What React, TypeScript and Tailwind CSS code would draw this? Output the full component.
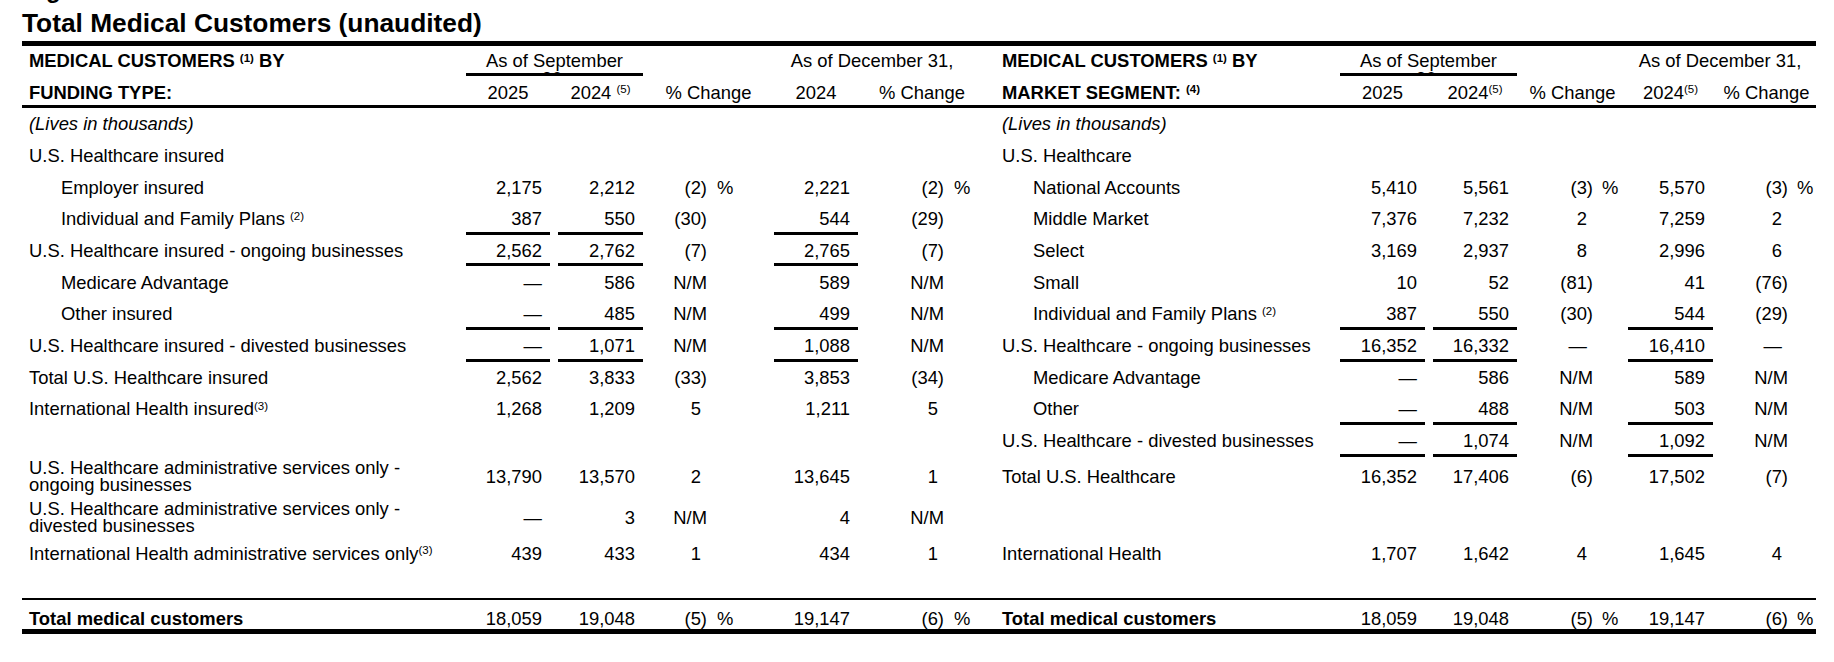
import React from "react";

type Side = {
  label: string;
  indent: string;
  a: string;
  b: string;
  ab: string;
  pv: string;
  ps: string;
  p: string;
  d: string;
  ev: string;
  es: string;
  de: string;
};

const left: Side = {
  label: "w-[440px] pl-[7px]",
  indent: "pl-[39px]",
  a: "w-[92px]",
  b: "w-[93px]",
  ab: "w-[185px]",
  pv: "w-[60px]",
  ps: "w-[63px] pl-[10px]",
  p: "w-[123px]",
  d: "w-[92px]",
  ev: "w-[82px]",
  es: "w-[38px] pl-[10px]",
  de: "w-[212px] pr-[8px]",
};

const right: Side = {
  label: "w-[354px] pl-[20px]",
  indent: "pl-[51px]",
  a: "w-[93px]",
  b: "w-[92px]",
  ab: "w-[185px]",
  pv: "w-[72px]",
  ps: "w-[31px] pl-[9px]",
  p: "w-[103px]",
  d: "w-[93px]",
  ev: "w-[71px]",
  es: "w-[28px] pl-[9px]",
  de: "w-[192px]",
};

// shared row heights so both halves line up
const heights = [
  "h-[31.7px]",
  "h-[31.7px]",
  "h-[31.7px]",
  "h-[31.7px]",
  "h-[31.7px]",
  "h-[31.7px]",
  "h-[31.7px]",
  "h-[31.7px]",
  "h-[31.7px]",
  "h-[31.7px]",
  "h-[31.7px]",
  "h-[39.3px]",
  "h-[43px]",
  "h-[29px]",
];

type Row = {
  label?: React.ReactNode;
  indent?: boolean;
  italic?: boolean;
  v?: [string, string, string, string, string];
  pct?: boolean;
  ul?: boolean;
};

const Sup = ({ children }: { children: React.ReactNode }) => (
  <sup className="text-[11.5px]">{children}</sup>
);

const TwoLine = ({ a, b }: { a: string; b: string }) => (
  <div className="leading-[17.5px]">
    {a}
    <br />
    {b}
  </div>
);

const leftRows: Row[] = [
  { label: "(Lives in thousands)", italic: true },
  { label: "U.S. Healthcare insured" },
  { label: "Employer insured", indent: true, v: ["2,175", "2,212", "(2)", "2,221", "(2)"], pct: true },
  {
    label: (
      <>
        Individual and Family Plans <Sup>(2)</Sup>
      </>
    ),
    indent: true,
    v: ["387", "550", "(30)", "544", "(29)"],
    ul: true,
  },
  { label: "U.S. Healthcare insured - ongoing businesses", v: ["2,562", "2,762", "(7)", "2,765", "(7)"], ul: true },
  { label: "Medicare Advantage", indent: true, v: ["—", "586", "N/M", "589", "N/M"] },
  { label: "Other insured", indent: true, v: ["—", "485", "N/M", "499", "N/M"], ul: true },
  { label: "U.S. Healthcare insured - divested businesses", v: ["—", "1,071", "N/M", "1,088", "N/M"], ul: true },
  { label: "Total U.S. Healthcare insured", v: ["2,562", "3,833", "(33)", "3,853", "(34)"] },
  {
    label: (
      <>
        International Health insured<Sup>(3)</Sup>
      </>
    ),
    v: ["1,268", "1,209", "5", "1,211", "5"],
  },
  {},
  {
    label: <TwoLine a="U.S. Healthcare administrative services only -" b="ongoing businesses" />,
    v: ["13,790", "13,570", "2", "13,645", "1"],
  },
  {
    label: <TwoLine a="U.S. Healthcare administrative services only -" b="divested businesses" />,
    v: ["—", "3", "N/M", "4", "N/M"],
  },
  {
    label: (
      <>
        International Health administrative services only<Sup>(3)</Sup>
      </>
    ),
    v: ["439", "433", "1", "434", "1"],
  },
];

const rightRows: Row[] = [
  { label: "(Lives in thousands)", italic: true },
  { label: "U.S. Healthcare" },
  { label: "National Accounts", indent: true, v: ["5,410", "5,561", "(3)", "5,570", "(3)"], pct: true },
  { label: "Middle Market", indent: true, v: ["7,376", "7,232", "2", "7,259", "2"] },
  { label: "Select", indent: true, v: ["3,169", "2,937", "8", "2,996", "6"] },
  { label: "Small", indent: true, v: ["10", "52", "(81)", "41", "(76)"] },
  {
    label: (
      <>
        Individual and Family Plans <Sup>(2)</Sup>
      </>
    ),
    indent: true,
    v: ["387", "550", "(30)", "544", "(29)"],
    ul: true,
  },
  { label: "U.S. Healthcare - ongoing businesses", v: ["16,352", "16,332", "—", "16,410", "—"], ul: true },
  { label: "Medicare Advantage", indent: true, v: ["—", "586", "N/M", "589", "N/M"] },
  { label: "Other", indent: true, v: ["—", "488", "N/M", "503", "N/M"], ul: true },
  { label: "U.S. Healthcare - divested businesses", v: ["—", "1,074", "N/M", "1,092", "N/M"], ul: true },
  { label: "Total U.S. Healthcare", v: ["16,352", "17,406", "(6)", "17,502", "(7)"] },
  {},
  { label: "International Health", v: ["1,707", "1,642", "4", "1,645", "4"] },
];

const Pct = ({ v }: { v: string }) => {
  const pad = !(v.startsWith("(") || v === "N/M");
  return (
    <span className="whitespace-nowrap">
      {v}
      {pad && <span className="invisible">)</span>}
    </span>
  );
};

const Num = ({ w, v, ul }: { w: string; v?: string; ul?: boolean }) => (
  <div className={`${w} h-full px-[4px]`}>
    <div
      className={`h-full flex items-center justify-end pr-[8px] whitespace-nowrap ${
        ul ? "shadow-[inset_0_-3px_0_#000]" : ""
      }`}
    >
      {v}
    </div>
  </div>
);

const Cells = ({ s, v, pct, ul }: { s: Side; v?: Row["v"]; pct?: boolean; ul?: boolean }) => (
  <>
    <Num w={s.a} v={v?.[0]} ul={ul} />
    <Num w={s.b} v={v?.[1]} ul={ul} />
    <div className={`${s.pv} h-full flex items-center justify-end`}>{v && <Pct v={v[2]} />}</div>
    <div className={`${s.ps} h-full flex items-center`}>{pct ? "%" : ""}</div>
    <Num w={s.d} v={v?.[3]} ul={ul} />
    <div className={`${s.ev} h-full flex items-center justify-end`}>{v && <Pct v={v[4]} />}</div>
    <div className={`${s.es} h-full flex items-center`}>{pct ? "%" : ""}</div>
  </>
);

const Header = ({ s, top, bottom, dec }: { s: Side; top: React.ReactNode; bottom: React.ReactNode; dec: React.ReactNode }) => (
  <div className="flex flex-col">
    <div className="flex h-[30px]">
      <div className={`${s.label} flex items-center font-bold whitespace-nowrap`}>
        <span>{top}</span>
      </div>
      <div className={`${s.ab} px-[4px]`}>
        <div className="h-full border-b-[3px] border-black overflow-hidden">
          <div className="pt-[6px] text-center leading-[17.5px]">
            As of September
            <br />
            30,
          </div>
        </div>
      </div>
      <div className={s.p} />
      <div className={`${s.de} pt-[6px] text-center leading-[17.5px] whitespace-nowrap`}>As of December 31,</div>
    </div>
    <div className="flex h-[29px] pt-[4px] items-center whitespace-nowrap">
      <div className={`${s.label} font-bold`}>{bottom}</div>
      <div className={`${s.a} text-center`}>2025</div>
      <div className={`${s.b} text-center`}>
        2024{s === left ? " " : ""}
        <Sup>(5)</Sup>
      </div>
      <div className={`${s.p} text-center`}>% Change</div>
      <div className={`${s.d} text-center`}>{dec}</div>
      <div className="flex-1 text-center">% Change</div>
    </div>
  </div>
);

const Body = ({ s, rows }: { s: Side; rows: Row[] }) => (
  <div className="flex flex-col">
    {rows.map((r, i) => (
      <div key={i} className={`flex ${heights[i]}`}>
        <div
          className={`${s.label} ${r.indent ? s.indent : ""} ${r.italic ? "italic" : ""} h-full flex items-center whitespace-nowrap`}
        >
          <span>{r.label}</span>
        </div>
        <Cells s={s} v={r.v} pct={r.pct} ul={r.ul} />
      </div>
    ))}
  </div>
);

const Total = ({ s }: { s: Side }) => (
  <div className="flex h-full pt-[8px] items-center">
    <div className={`${s.label} h-full flex items-center font-bold whitespace-nowrap`}>Total medical customers</div>
    <Cells s={s} v={["18,059", "19,048", "(5)", "19,147", "(6)"]} pct />
  </div>
);

export default function App() {
  return (
    <div className="w-[1834px] h-[662px] overflow-hidden bg-white text-black font-['Liberation_Sans',Arial,sans-serif] text-[18.4px] leading-[1.15]">
      <div className="h-[4px] overflow-hidden pl-[22px]">
        <div className="mt-[-23px] text-[24px] leading-[26px] font-bold">Cigna Healthcare</div>
      </div>
      <h1 className="mt-[6px] h-[26px] pl-[22px] text-[26.3px] leading-[26px] font-bold whitespace-nowrap">
        Total Medical Customers (unaudited)
      </h1>

      <div className="ml-[22px] mt-[5px] w-[1794px]">
        <div className="h-[5px] bg-black" />

        <div className="flex border-b-[3px] border-black">
          <Header
            s={left}
            top={
              <>
                MEDICAL CUSTOMERS <Sup>(1)</Sup> BY
              </>
            }
            bottom="FUNDING TYPE:"
            dec="2024"
          />
          <Header
            s={right}
            top={
              <>
                MEDICAL CUSTOMERS <Sup>(1)</Sup> BY
              </>
            }
            bottom={
              <>
                MARKET SEGMENT: <Sup>(4)</Sup>
              </>
            }
            dec={
              <>
                2024<Sup>(5)</Sup>
              </>
            }
          />
        </div>

        <div className="flex">
          <Body s={left} rows={leftRows} />
          <Body s={right} rows={rightRows} />
        </div>

        <div className="h-[30px]" />
        <div className="flex h-[36px] border-t-[2px] border-b-[5px] border-black">
          <Total s={left} />
          <Total s={right} />
        </div>
      </div>
    </div>
  );
}
